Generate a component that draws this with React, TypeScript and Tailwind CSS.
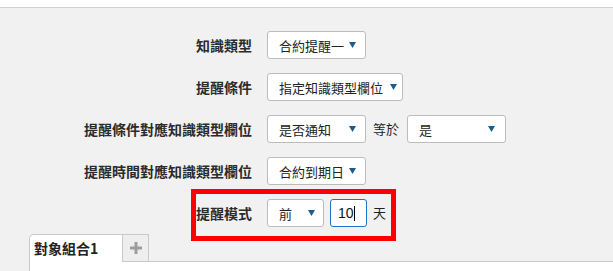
import React from "react";

const Caret = () => (
  <svg width="7" height="6" viewBox="0 0 7 6" className="shrink-0">
    <polygon points="0,0 7,0 3.5,6" fill="#1d5c88" />
  </svg>
);

function Select({ text, w, pr = "pr-[9px]" }: { text: string; w: string; pr?: string }) {
  return (
    <div
      className={`flex h-[28px] items-center justify-between rounded-[3px] border border-[#bcbcbc] bg-white pl-[11px] ${pr} ${w} text-[13px] text-[#222]`}
    >
      <span className="whitespace-nowrap leading-none">{text}</span>
      <Caret />
    </div>
  );
}

function Label({ children }: { children: React.ReactNode }) {
  return (
    <div className="flex h-[28px] items-center justify-end whitespace-nowrap text-[14px] font-bold text-[#2b2b2b]">
      {children}
    </div>
  );
}

export default function App() {
  return (
    <div
      className="relative h-[271px] w-[613px] overflow-hidden bg-white"
      style={{ fontFamily: '"Noto Sans CJK TC", "Noto Sans", sans-serif' }}
    >
      <div className="h-[7px] bg-white" />
      <div className="flex h-[264px] flex-col border-t border-[#d2d2d2] bg-[#f1f1f1]">
        <div className="grid grid-cols-[252px_auto] gap-x-[15px] gap-y-[14px] pt-[23px]">
          <Label>知識類型</Label>
          <div className="flex">
            <Select text="合約提醒一" w="w-[99px]" />
          </div>

          <Label>提醒條件</Label>
          <div className="flex">
            <Select text="指定知識類型欄位" w="w-[136px]" pr="pr-[5px]" />
          </div>

          <Label>提醒條件對應知識類型欄位</Label>
          <div className="flex items-center">
            <Select text="是否通知" w="w-[99px]" />
            <span className="ml-[7px] mr-[8px] text-[13px] text-[#222]">等於</span>
            <Select text="是" w="w-[99px]" pr="pr-[10px]" />
          </div>

          <Label>提醒時間對應知識類型欄位</Label>
          <div className="flex">
            <Select text="合約到期日" w="w-[99px]" />
          </div>

          <Label>提醒模式</Label>
          <div className="flex items-center">
            <Select text="前" w="w-[57px]" pr="pr-[8px]" />
            <div
              className="ml-[6px] flex h-[28px] w-[37px] items-center rounded-[3px] border border-[#1f74c6] bg-white pl-[7px] text-[14px] text-[#111]"
              style={{ fontFamily: '"Liberation Sans", sans-serif' }}
            >
              <span className="leading-none">10</span>
              <span className="inline-block h-[15px] w-[1px] bg-black" />
            </div>
            <span className="ml-[6px] text-[13px] text-[#222]">天</span>
          </div>
        </div>

        <div className="mt-[7px] flex h-[28px] items-end pl-[29px]">
          <div className="flex h-[28px] w-[94px] items-center rounded-tl-[5px] border-l border-r border-t border-[#c9c9c9] bg-white pl-[4px] text-[14px] font-bold text-[#222]">
            對象組合1
          </div>
          <div className="flex h-[28px] w-[26px] items-center justify-center border-b border-r border-t border-[#c9c9c9] bg-[#eeeeee]">
            <svg width="12" height="12" viewBox="0 0 12 12">
              <rect x="4.5" y="0" width="3" height="12" fill="#9d9d9d" />
              <rect x="0" y="4.5" width="12" height="3" fill="#9d9d9d" />
            </svg>
          </div>
          <div className="h-[28px] flex-1 border-b border-[#c9c9c9]" />
        </div>
        <div className="ml-[29px] flex-1 border-l border-[#c9c9c9] bg-white" />
      </div>

      <div className="pointer-events-none absolute left-[191px] top-[189px] h-[52px] w-[205px] border-[5px] border-[#ff0000]" />
    </div>
  );
}
